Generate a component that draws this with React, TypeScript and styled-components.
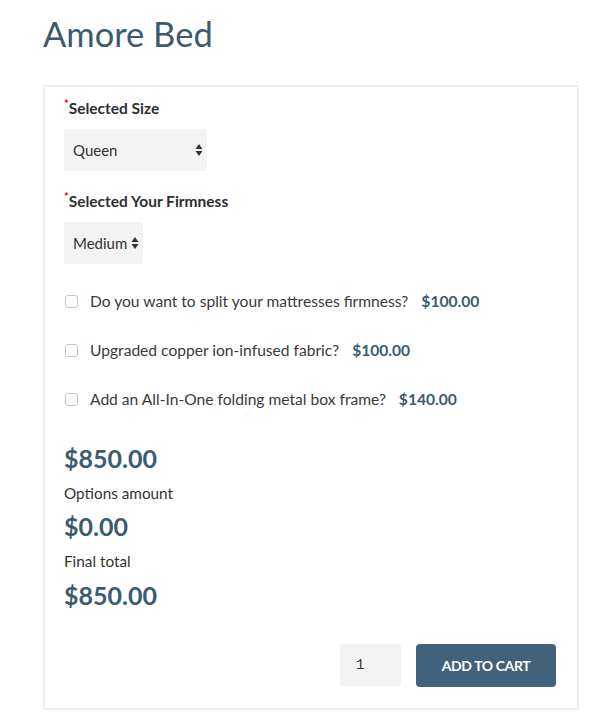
import React from "react";
import styled, { createGlobalStyle } from "styled-components";

const GlobalStyle = createGlobalStyle`
  body {
    margin: 0;
    background: #ffffff;
    font-family: Lato, "Open Sans", Arial, sans-serif;
    color: #333333;
  }
`;

const Page = styled.div`
  padding: 12px 12px 14px 43px;
`;

const Title = styled.h1`
  margin: 0;
  font-size: 34.5px;
  line-height: 44px;
  font-weight: 400;
  color: #3d5a6d;
`;

const Card = styled.div`
  margin-top: 29px;
  width: 536px;
  box-sizing: border-box;
  border: 2px solid #efefef;
  padding: 11px 21px 21px 19px;
  display: flex;
  flex-direction: column;
`;

const Label = styled.div<{ $gap?: number }>`
  margin-top: ${(p) => p.$gap ?? 0}px;
  font-size: 15.5px;
  line-height: 20px;
  font-weight: 700;
  color: #2f2f2f;
`;

const Required = styled.span`
  color: #d0021b;
  font-size: 11px;
  vertical-align: top;
  line-height: 12px;
`;

const SelectWrap = styled.div<{ $width: number }>`
  position: relative;
  margin-top: 11px;
  width: ${(p) => p.$width}px;
  height: 42px;
`;

const Select = styled.select`
  appearance: none;
  width: 100%;
  height: 100%;
  border: none;
  border-radius: 3px;
  background: #f3f3f3;
  padding: 0 0 0 9px;
  font-family: inherit;
  font-size: 15px;
  color: #333333;
  outline: none;
`;

const Arrows = styled.svg`
  position: absolute;
  right: 4px;
  top: 14px;
  pointer-events: none;
`;

const Options = styled.div`
  margin-top: 27px;
  display: flex;
  flex-direction: column;
  gap: 29px;
`;

const OptionRow = styled.label`
  display: flex;
  align-items: center;
  font-size: 15.6px;
  line-height: 20px;
  color: #3a3a3a;
`;

const Box = styled.input`
  appearance: none;
  margin: 0 12px 0 1px;
  width: 13px;
  height: 13px;
  border: 1px solid #c4c4c4;
  border-radius: 3px;
  background: #ffffff;
`;

const OptionPrice = styled.span`
  margin-left: 13px;
  font-weight: 700;
  color: #3b5b70;
`;

const Amount = styled.div<{ $gap: number }>`
  margin-top: ${(p) => p.$gap}px;
  font-size: 25px;
  line-height: 30px;
  font-weight: 700;
  color: #3b5b70;
`;

const AmountLabel = styled.div`
  margin-top: 10px;
  font-size: 15.3px;
  line-height: 20px;
  color: #333333;
`;

const CartRow = styled.div`
  margin-top: 34px;
  display: flex;
  justify-content: flex-end;
  gap: 15px;
`;

const Qty = styled.input`
  width: 61px;
  height: 42px;
  box-sizing: border-box;
  border: none;
  border-radius: 2px;
  background: #f3f3f3;
  padding: 0 0 0 16px;
  font-family: "Liberation Mono", monospace;
  font-size: 14px;
  color: #333333;
`;

const CartButton = styled.button`
  width: 140px;
  height: 43px;
  border: none;
  border-radius: 4px;
  background: #41627a;
  color: #ffffff;
  font-family: Lato, Arial, sans-serif;
  font-size: 14px;
  font-weight: 700;
  letter-spacing: -0.4px;
  text-transform: uppercase;
`;

const ArrowIcon = () => (
  <Arrows width="8" height="14" viewBox="0 0 8 14">
    <path d="M4 1 L7.5 6 L0.5 6 Z" fill="#333" />
    <path d="M4 13 L7.5 8 L0.5 8 Z" fill="#333" />
  </Arrows>
);

const options = [
  { text: "Do you want to split your mattresses firmness?", price: "$100.00" },
  { text: "Upgraded copper ion-infused fabric?", price: "$100.00" },
  { text: "Add an All-In-One folding metal box frame?", price: "$140.00" },
];

export default function App() {
  return (
    <>
      <GlobalStyle />
      <Page>
        <Title>Amore Bed</Title>
        <Card>
          <Label>
            <Required>*</Required>Selected Size
          </Label>
          <SelectWrap $width={143}>
            <Select defaultValue="Queen">
              <option>Twin</option>
              <option>Full</option>
              <option>Queen</option>
              <option>King</option>
            </Select>
            <ArrowIcon />
          </SelectWrap>

          <Label $gap={20}>
            <Required>*</Required>Selected Your Firmness
          </Label>
          <SelectWrap $width={79}>
            <Select defaultValue="Medium">
              <option>Soft</option>
              <option>Medium</option>
              <option>Firm</option>
            </Select>
            <ArrowIcon />
          </SelectWrap>

          <Options>
            {options.map((o) => (
              <OptionRow key={o.text}>
                <Box type="checkbox" />
                {o.text}
                <OptionPrice>{o.price}</OptionPrice>
              </OptionRow>
            ))}
          </Options>

          <Amount $gap={34}>$850.00</Amount>
          <AmountLabel>Options amount</AmountLabel>
          <Amount $gap={8}>$0.00</Amount>
          <AmountLabel>Final total</AmountLabel>
          <Amount $gap={9}>$850.00</Amount>

          <CartRow>
            <Qty type="text" defaultValue="1" />
            <CartButton>Add to cart</CartButton>
          </CartRow>
        </Card>
      </Page>
    </>
  );
}
